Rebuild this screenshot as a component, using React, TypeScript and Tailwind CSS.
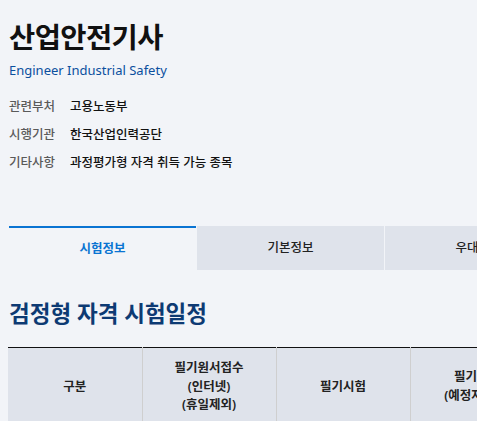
import React from "react";

const INFO = [
  { label: "관련부처", value: "고용노동부" },
  { label: "시행기관", value: "한국산업인력공단" },
  { label: "기타사항", value: "과정평가형 자격 취득 가능 종목" },
];

const TABS = ["시험정보", "기본정보", "우대현황", "일자리정보"];

export default function App() {
  return (
    <div className="h-[421px] w-[477px] overflow-hidden bg-[#f2f4f8] font-['Noto_Sans','Noto_Sans_CJK_KR',sans-serif]">
      <div className="w-[900px] pl-[8px]">
        {/* Header */}
        <h1 className="pl-[1px] pt-[17px] text-[28.5px] font-bold leading-[40px] tracking-[-0.02em] text-[#111]">
          산업안전기사
        </h1>
        <p className="mt-[4px] pl-[1px] text-[13px] leading-[18px] text-[#0b4f9e]">
          Engineer Industrial Safety
        </p>
        <dl className="mt-[18px] flex flex-col gap-[9px] pl-[1px] text-[12.5px] font-medium leading-[19px]">
          {INFO.map((row) => (
            <div key={row.label} className="flex">
              <dt className="w-[61px] text-[#5a5a5a]">{row.label}</dt>
              <dd className="text-[#111]">{row.value}</dd>
            </div>
          ))}
        </dl>

        {/* Tabs */}
        <div className="mt-[54px] flex gap-px pl-[1px]">
          {TABS.map((t, i) => (
            <div
              key={t}
              className={`flex h-[44px] w-[187px] shrink-0 items-center justify-center text-[12.5px] ${
                i === 0
                  ? "border-t-2 border-[#0a74d2] font-semibold text-[#0a74d2]"
                  : "bg-[#dfe3eb] font-medium text-[#222]"
              }`}
            >
              {t}
            </div>
          ))}
        </div>

        {/* Schedule */}
        <h2 className="mt-[28px] pl-[1px] text-[22.5px] font-bold leading-[32px] text-[#0d3a73]">
          검정형 자격 시험일정
        </h2>
        <table className="mt-[17px] border-collapse border-t-[1.5px] border-[#111] text-[12.5px] leading-[18.5px] text-[#222]">
          <thead>
            <tr className="bg-[#dfe3eb]">
              <th className="h-[78px] w-[134px] border-r border-[#cfcfcf] font-semibold">구분</th>
              <th className="w-[134px] border-r border-[#cfcfcf] font-semibold">
                필기원서접수
                <br />
                (인터넷)
                <br />
                (휴일제외)
              </th>
              <th className="w-[134px] border-r border-[#cfcfcf] font-semibold">필기시험</th>
              <th className="w-[134px] border-r border-[#cfcfcf] font-semibold">
                필기합격
                <br />
                (예정자)발표
              </th>
            </tr>
          </thead>
        </table>
      </div>
    </div>
  );
}
